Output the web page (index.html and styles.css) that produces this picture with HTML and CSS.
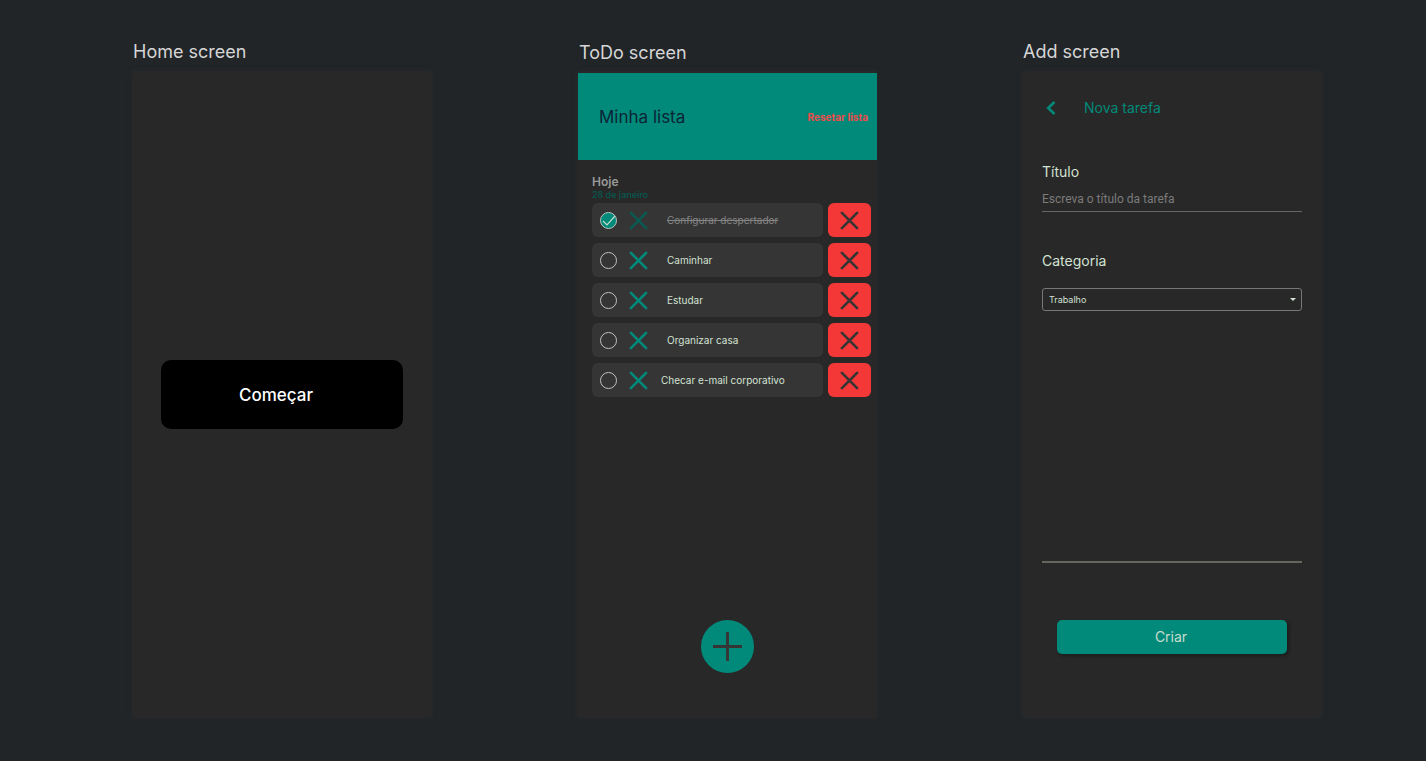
FILE: index.html
```html
<!DOCTYPE html>
<html lang="pt-BR">
<head>
<meta charset="utf-8">
<title>Minha lista</title>
<link rel="stylesheet" href="styles.css">
</head>
<body>
<svg class="defs" aria-hidden="true">
  <symbol id="cross" viewBox="0 0 20 20"><path d="M2 2 18 18M18 2 2 18" fill="none" stroke="currentColor" stroke-width="2.800" stroke-linecap="round"/></symbol>
</svg>
<main class="board">
  <section class="column">
    <h2 class="column-title">Home screen</h2>
    <div class="screen home">
      <button class="start" type="button">Começar</button>
    </div>
  </section>

  <section class="column">
    <h2 class="column-title column-title-low">ToDo screen</h2>
    <div class="screen todo">
      <header class="list-header">
        <h1 class="list-title">Minha lista</h1>
        <button class="reset" type="button">Resetar lista</button>
      </header>
      <div class="list-body">
        <h3 class="day">Hoje</h3>
        <p class="date">28 de janeiro</p>
        <ul class="tasks">
          <li class="task">
            <label class="card done"><input class="check" type="checkbox" checked><svg class="mark"><use href="#cross"/></svg><span class="name">Configurar despertador</span></label>
            <button class="remove" type="button" aria-label="Remover"><svg class="x"><use href="#cross"/></svg></button>
          </li>
          <li class="task">
            <label class="card"><input class="check" type="checkbox"><svg class="mark"><use href="#cross"/></svg><span class="name">Caminhar</span></label>
            <button class="remove" type="button" aria-label="Remover"><svg class="x"><use href="#cross"/></svg></button>
          </li>
          <li class="task">
            <label class="card"><input class="check" type="checkbox"><svg class="mark"><use href="#cross"/></svg><span class="name">Estudar</span></label>
            <button class="remove" type="button" aria-label="Remover"><svg class="x"><use href="#cross"/></svg></button>
          </li>
          <li class="task">
            <label class="card"><input class="check" type="checkbox"><svg class="mark"><use href="#cross"/></svg><span class="name">Organizar casa</span></label>
            <button class="remove" type="button" aria-label="Remover"><svg class="x"><use href="#cross"/></svg></button>
          </li>
          <li class="task">
            <label class="card wide"><input class="check" type="checkbox"><svg class="mark"><use href="#cross"/></svg><span class="name">Checar e-mail corporativo</span></label>
            <button class="remove" type="button" aria-label="Remover"><svg class="x"><use href="#cross"/></svg></button>
          </li>
        </ul>
      </div>
      <button class="add" type="button" aria-label="Adicionar"><svg class="plus" viewBox="0 0 30 30"><path d="M15 0v30M0 15h30" fill="none" stroke="currentColor" stroke-width="3"/></svg></button>
    </div>
  </section>

  <section class="column">
    <h2 class="column-title">Add screen</h2>
    <form class="screen new">
      <header class="new-header">
        <button class="back" type="button" aria-label="Voltar"><svg class="chevron" viewBox="0 0 10 14"><path d="M8.500 1 2.200 7l6.300 6" fill="none" stroke="currentColor" stroke-width="2.600"/></svg></button>
        <h1 class="new-title">Nova tarefa</h1>
      </header>
      <label class="label" for="titulo">Título</label>
      <input class="text" id="titulo" type="text" placeholder="Escreva o título da tarefa">
      <label class="label category" for="categoria">Categoria</label>
      <div class="picker">
        <select class="select" id="categoria"><option>Trabalho</option></select>
        <svg class="caret" viewBox="0 0 6 3"><path d="M0 0h6L3 3z" fill="currentColor"/></svg>
      </div>
      <hr class="rule">
      <button class="create" type="button">Criar</button>
    </form>
  </section>
</main>
</body>
</html>
```

FILE: styles.css
```css
* { box-sizing: border-box; }
body { margin: 0; background: #212528; color: #d6d6d6; font-family: Inter, sans-serif; }
h1, h2, h3, p, ul { margin: 0; padding: 0; font-weight: 400; }
ul { list-style: none; }
button, input, select { margin: 0; padding: 0; border: 0; background: none; color: inherit; font-family: inherit; }
.defs { display: none; }

.board {
  display: grid;
  grid-template-columns: repeat(3, minmax(0, 1fr));
  column-gap: 145px;
  min-height: 100vh;
  padding: 40px 104px 43px 132px;
}
.column { display: flex; flex-direction: column; }
.column-title { height: 31px; padding-left: 1px; font-size: 18px; line-height: 24px; }
.column-title-low { padding-top: 1px; padding-left: 2px; }
.screen {
  display: flex;
  flex: 1;
  flex-direction: column;
  border-radius: 3px;
  background: #282828;
  box-shadow: 0 0 5px #282a2c;
}

.home { justify-content: center; padding: 0 29px; }
.start { height: 69px; padding-right: 12px; border-radius: 10px; background: #000; color: #fff; font-size: 17px; font-weight: 500; }

.list-header {
  display: flex;
  align-items: center;
  justify-content: space-between;
  height: 87px;
  margin: 2px 0 0 1px;
  padding: 0 9px 0 21px;
  background: #018a7a;
}
.list-title { padding-top: 1px; color: #0c2436; font-size: 17px; line-height: 22px; }
.reset { color: #f04a4a; font-size: 10px; font-weight: 700; }
.list-body { padding: 14px 6px 0 15px; }
.day { color: #999; font-size: 12px; font-weight: 600; line-height: 16px; }
.date { margin-bottom: 4px; color: #045b51; font-size: 9px; font-weight: 500; line-height: 9px; }
.tasks { display: grid; row-gap: 6px; }
.task { display: flex; gap: 5px; }
.card { display: flex; flex: 1; align-items: center; height: 34px; padding: 0 8px; border-radius: 6px; background: #353535; color: #d3e2d3; }
.check { flex: none; appearance: none; width: 17px; height: 17px; margin-right: 12px; border: 1px solid #bfc4bf; border-radius: 50%; }
.check:checked {
  background: #018a7a url("data:image/svg+xml,%3Csvg xmlns='http://www.w3.org/2000/svg' viewBox='0 0 15 15'%3E%3Cpath d='M2 8l4 4 8-9' fill='none' stroke='%23c5dccd' stroke-width='1.200'/%3E%3C/svg%3E");
}
.mark { flex: none; width: 19px; height: 19px; margin-right: 19px; color: #018a7a; }
.name { font-size: 10px; line-height: 16px; white-space: nowrap; }
.done .mark { color: #0b5a51; }
.done .name { color: #858585; text-decoration: line-through; }
.wide .mark { margin-right: 13px; }
.remove { display: grid; place-items: center; width: 43px; border-radius: 6px; background: #f43737; color: #353535; }
.x { width: 19px; height: 19px; }
.add { display: grid; place-items: center; align-self: center; width: 53px; height: 53px; margin-top: auto; margin-bottom: 45px; border-radius: 50%; background: #018a7a; color: #353535; }
.plus { width: 29px; height: 29px; }

.new { padding: 27px 20px 0; }
.new-header { display: flex; align-items: center; gap: 27px; height: 20px; margin-bottom: 44px; padding-left: 3px; color: #018a7a; }
.back { display: grid; place-items: center; width: 12px; height: 20px; }
.chevron { width: 10px; height: 14px; }
.new-title { font-size: 14px; line-height: 20px; }
.label { color: #d3e2d3; font-size: 14px; line-height: 20px; }
.text { height: 30px; padding-top: 5px; border-bottom: 1px solid #666; font-family: Roboto, sans-serif; font-size: 12px; }
.text::placeholder { color: #7b7b7b; opacity: 1; }
.category { margin-top: 39px; }
.picker { position: relative; margin-top: 17px; }
.select { appearance: none; display: block; width: 100%; height: 23px; padding: 0 6px; border: 1px solid #777; border-radius: 3px; color: #d3e2d3; font-size: 9px; }
.caret { position: absolute; top: 10px; right: 6px; width: 6px; height: 3px; color: #d3e2d3; }
.rule { width: 100%; height: 2px; margin: auto 0 57px; border: 0; background: #62665f; }
.create { height: 34px; margin: 0 15px 64px; padding: 0 2px 2px 0; border-radius: 5px; background: #018a7a; box-shadow: 2px 2px 3px #1c1c1c; color: #c5dccd; font-size: 14px; }
```
